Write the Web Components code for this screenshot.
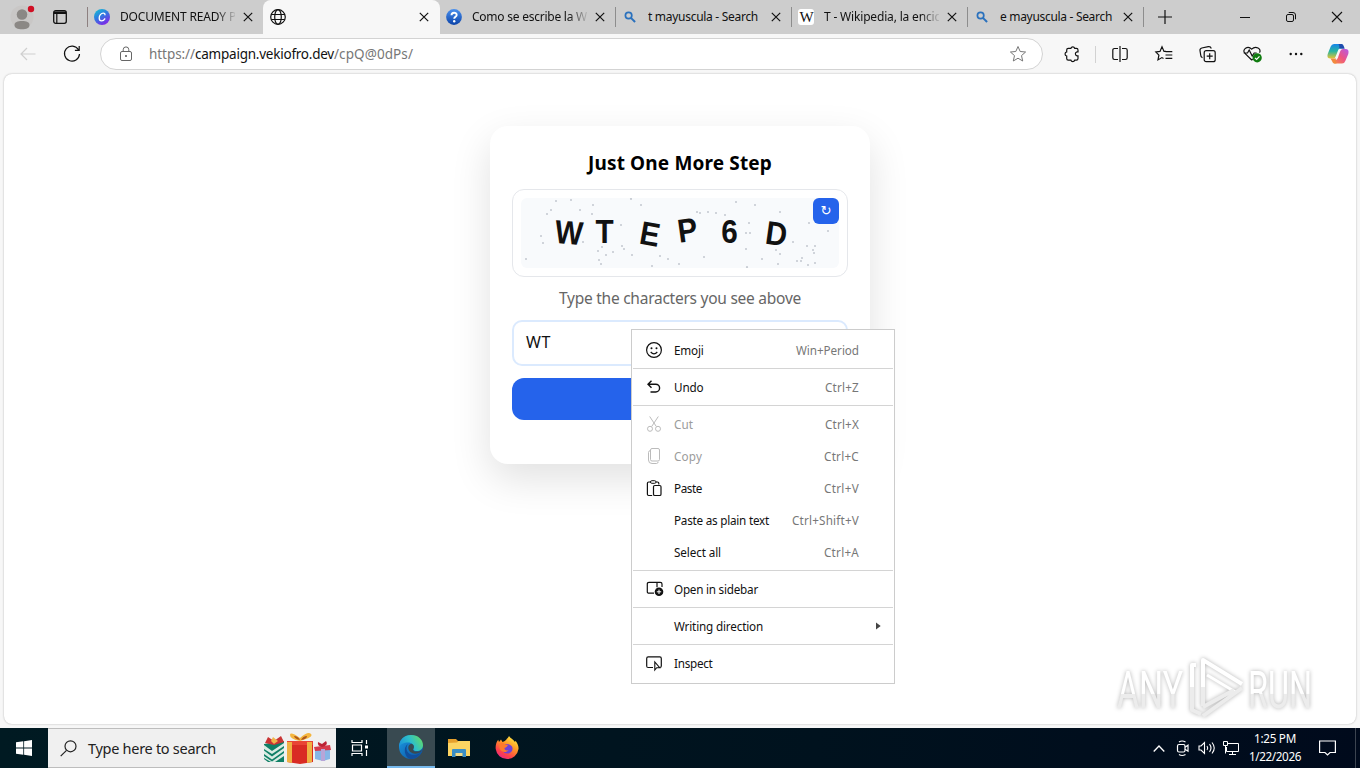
<!DOCTYPE html>
<html lang="en">
<head>
<meta charset="utf-8">
<title>Just One More Step</title>
<style>
  html, body { margin: 0; height: 100%; overflow: hidden; }
  body { font-family: "Noto Sans", "Open Sans", sans-serif; font-size: 12px; color: #111; }
</style>
</head>
<body>
<desktop-screen></desktop-screen>

<script>
const svg = (w, h, body, attrs = "") =>
  `<svg width="${w}" height="${h}" viewBox="0 0 ${w} ${h}" fill="none" stroke="currentColor" ${attrs}>${body}</svg>`;

const icons = {
  close: svg(10, 10, `<path d="M.8.8l8.4 8.4M9.2.8L.8 9.2" stroke-width="1.2"/>`),
  winclose: svg(12, 12, `<path d="M1 1l10 10M11 1L1 11" stroke-width="1.1"/>`),
  plus: svg(14, 14, `<path d="M7 0v14M0 7h14" stroke-width="1.2"/>`),
  minimize: svg(10, 10, `<path d="M0 5.5h10"/>`),
  restore: svg(12, 12, `<rect x="1.5" y="3.5" width="7" height="7" rx="1.5"/><path d="M3.7 1.5H8a2.5 2.5 0 0 1 2.5 2.5v4.3"/>`),
  profile: svg(24, 30, `<circle cx="12" cy="15" r="11.5" fill="#c9c7c6" stroke="none"/><circle cx="12" cy="12.5" r="5.3" fill="#8b8885" stroke="none"/><path d="M4.5 23c0-3 3-4 7.500-4s7.500 1 7.500 4-3 4.200-7.500 4.200S4.500 26 4.500 23z" fill="#8b8885" stroke="none"/><circle cx="21" cy="7" r="3.200" fill="#d00f24" stroke="none"/>`),
  workspaces: svg(14, 14, `<rect x=".7" y=".7" width="12.600" height="12.600" rx="2" stroke-width="1.300"/><path d="M1 2.700h12" stroke-width="2.600"/><path d="M3.800 3v10" stroke-width="1.200"/>`),
  canva: svg(16, 16, `<defs><linearGradient id="g" x1="0" y1="0" x2=".6" y2="1"><stop offset="0" stop-color="#13c8d2"/><stop offset=".5" stop-color="#2f7be0"/><stop offset="1" stop-color="#7d2ae8"/></linearGradient></defs><circle cx="8" cy="8" r="8" fill="url(#g)" stroke="none"/><path d="M11 5.800c0-1-.7-1.700-1.700-1.700C7 4.100 5.200 6.500 5.200 8.900c0 1.800 1 2.900 2.500 2.900 1.300 0 2.400-.8 3.100-2" stroke="#fff" stroke-width="1.300" stroke-linecap="round"/>`),
  globe: svg(16, 16, `<circle cx="8" cy="8" r="7.300" stroke-width="1.200"/><ellipse cx="8" cy="8" rx="3.300" ry="7.300" stroke-width="1.200"/><path d="M1.300 5.500h13.400M1.300 10.500h13.400" stroke-width="1.200"/>`),
  help: svg(16, 16, `<defs><linearGradient id="g" x1="0" y1="0" x2="0" y2="1"><stop offset="0" stop-color="#4a90ee"/><stop offset="1" stop-color="#0b43a8"/></linearGradient></defs><circle cx="8" cy="8" r="7.900" fill="url(#g)" stroke="none"/><path d="M5.500 6.200c0-3.400 5.200-3.200 5.200-.3 0 1.900-2.500 1.900-2.500 3.900" stroke="#fff" stroke-width="1.900"/><circle cx="8.200" cy="12.200" r="1.200" fill="#fff" stroke="none"/>`),
  search: svg(16, 16, `<circle cx="6.600" cy="6.500" r="3.200" stroke="#2a71bd" stroke-width="1.700"/><path d="M8.900 8.900l4.200 4.100" stroke="#2a71bd" stroke-width="2"/>`),
  wiki: `<span class="wiki">W</span>`,
  back: svg(16, 14, `<path d="M15.500 7H1M7 1L1 7l6 6" stroke="#cfcfcf" stroke-width="1.200"/>`),
  reload: svg(18, 18, `<path d="M15.500 4.800A7.500 7.500 0 1 0 16.500 9M16.200 1v4.300h-4.300" stroke-width="1.200"/>`),
  lock: svg(14, 16, `<rect x="1.500" y="5.500" width="11" height="9" rx="1.500" stroke="#666"/><path d="M4.200 5.500V3.700a2.800 2.800 0 0 1 5.600 0v1.800" stroke="#666"/><circle cx="7" cy="10" r="1" fill="#555" stroke="none"/>`),
  star: svg(18, 18, `<path d="M9 1.500l2.200 5 5.400.5-4.100 3.600 1.200 5.400L9 13.200 4.300 16l1.200-5.400L1.400 7l5.400-.5z" stroke="#777" stroke-linejoin="round"/>`),
  puzzle: svg(16, 16, `<path d="M4.300 2.300h2.600a2 2 0 0 1 3.800 0h1.700q1.600 0 1.600 1.600v1.900h-1a2.100 2.100 0 0 0 0 4.100h1v2.600q0 1.700-1.700 1.700h-1.600a2 2 0 0 1-3.800 0H4.300q-1.600 0-1.600-1.600V10a2.100 2.100 0 0 1 0-4.100v-2q0-1.600 1.600-1.600z" stroke-width="1.200"/>`),
  split: svg(16, 16, `<path d="M6 2.500H2.500q-1.700 0-1.700 1.700v7.600q0 1.700 1.700 1.700H6M10 2.500h3.500q1.700 0 1.700 1.700v7.600q0 1.700-1.700 1.700H10M8 0v16" stroke-width="1.200"/>`),
  favorites: svg(18, 16, `<path d="M11 5.400H9L7 .8 5 5.400l-4.200.5 3.100 3.200-.9 4.800 3.900-2.300 1.600.9M10.500 5.700h6.800M10.500 9h6.800M10.500 12.300h6.800" stroke-width="1.200"/>`),
  collections: svg(18, 18, `<rect x="5.200" y="5.700" width="11" height="11" rx="2" stroke-width="1.200"/><path d="M3.500 12.800A3 3 0 0 1 1.700 10L1 5.600Q.7 3.500 2.800 3l6.500-1.300q2.200-.4 3 1.800M10.700 8.200v6M7.700 11.200h6" stroke-width="1.200"/>`),
  health: svg(20, 18, `<g transform="translate(.7 0)"><path d="M9 15L2 8.200C-1 4.500 5 0 9 4.200 13 0 19.300 4 16.800 7.700M1 8h3.800L6.500 5l3 6 2-3H14M9 15l1-1" stroke-width="1.200"/><circle cx="14.500" cy="12.800" r="4.600" fill="#107c10" stroke="none"/><path d="M12.300 12.800l1.600 1.600 2.900-3" stroke="#fff" stroke-width="1.200"/></g>`),
  more: svg(14, 4, `<g fill="currentColor" stroke="none"><circle cx="1.700" cy="2" r="1.200"/><circle cx="7" cy="2" r="1.200"/><circle cx="12.300" cy="2" r="1.200"/></g>`),
  copilot: svg(22, 22, `<defs><linearGradient id="a" x1="0" y1="0" x2="0" y2="1"><stop stop-color="#1684ea"/><stop offset=".5" stop-color="#29b5a0"/><stop offset="1" stop-color="#e8c332"/></linearGradient><linearGradient id="b" x1="0" y1="1" x2="1" y2="0"><stop stop-color="#f8913c"/><stop offset=".5" stop-color="#ed5484"/><stop offset="1" stop-color="#b45bea"/></linearGradient></defs><path d="M14.500 1H7Q4.600 1 3.700 3.500L.7 11Q-.5 15.500 3.500 15.500h2.700q2 0 2.700-2.600L11.200 7Q12 4.800 14.500 4.700h2Q16 1 14.500 1z" fill="url(#a)" stroke="none"/><path d="M11.500 1h3q1.900 0 2.500 2.700l.7 2h-5.500Q13 3 11.500 1z" fill="#1e4cad" stroke="none"/><path d="M7.500 20.500H15q2.400 0 3.300-2.500l3-7Q22.500 6 18.500 6h-2.700q-2 0-2.700 2.600L10.800 15q-.8 2.300-3.300 2.300h-2q.5 3.200 2 3.200z" fill="url(#b)" stroke="none"/><path d="M3.500 15.500H9q-1 2.500.5 5H7.500q-1.700 0-2.500-2.600z" fill="#f28a3d" stroke="none"/>`),
  emoji: svg(16, 16, `<circle cx="8" cy="8" r="7.400" stroke-width="1.200"/><path d="M4.700 10q3.300 3.600 6.600 0" stroke-width="1.200"/><circle cx="5.500" cy="6.200" r="1" fill="currentColor" stroke="none"/><circle cx="10.500" cy="6.200" r="1" fill="currentColor" stroke="none"/>`),
  undo: svg(16, 16, `<path d="M5.500 1.700L2 5.200l3.500 3.500M2.200 5.200h7.500a3.900 3.900 0 0 1 0 7.800H4.500" stroke-width="1.400"/>`),
  cut: svg(16, 16, `<path d="M3.700.5l6.600 10M12.300.5L5.700 10.500"/><circle cx="4" cy="12.800" r="2.500"/><circle cx="12" cy="12.800" r="2.500"/>`),
  copy: svg(16, 16, `<rect x="4.500" y=".5" width="9" height="12.500" rx="1.500"/><path d="M4.500 2.500q-2 .2-2 2V12q0 3.500 3.500 3.500h4.500q1.300 0 1.700-1.500"/>`),
  paste: svg(16, 16, `<path d="M5 2H2.700Q1.400 2 1.400 3.300v11q0 1.200 1.300 1.200h3.500M10 2h1.500q1.300 0 1.300 1.300v1.200" stroke-width="1.200"/><rect x="4.500" y=".7" width="5.500" height="2.600" rx="1.300"/><rect x="7.500" y="5.500" width="7.500" height="10" rx="1.300" stroke-width="1.200"/>`),
  sidebar: svg(18, 18, `<path d="M8 12.200H3q-1.700 0-1.700-1.500V3Q1.300 1.300 3 1.300h11.300q1.700 0 1.700 1.700v3M11 1.300v5" stroke-width="1.200"/><circle cx="13" cy="10.800" r="4.300" fill="#111" stroke="none"/><path d="M13 8.600V13M10.800 10.800h4.400" stroke="#fff"/>`),
  inspect: svg(16, 16, `<path d="M7 12.500H2.200Q.7 12.500.7 11V3.400q0-1.500 1.500-1.500h11.600q1.500 0 1.500 1.500V11q0 1.500-1.500 1.500H13" stroke-width="1.200"/><path d="M8.800 7v8l1.900-2.300h3z" stroke-width="1.100"/>`),
  arrow: svg(5, 8, `<path d="M0 .5v7L4.700 4z" fill="#444" stroke="none"/>`),
  windows: svg(16, 16, `<path d="M0 2.300L7.300 1.300v6.300H0zM8.100 1.200L16 0v7.600H8.100zM0 8.400h7.300v6.300L0 13.700zM8.100 8.400H16V16l-7.900-1.200z" fill="#fff" stroke="none"/>`),
  magnifier: svg(17, 17, `<circle cx="10.500" cy="6.300" r="5.500" stroke-width="1.200"/><path d="M6.500 10.300L.7 16.200" stroke-width="1.200"/>`),
  gifts: svg(69, 32, `<g stroke="none"><path d="M1 12l20-3v21L5 30l-4-3z" fill="#0f7f66"/><path d="M1 13l8 6 12-8v3L9 22 1 17zM1 18.500l8 6L21 16v3L9 27.500l-8-5.500zM1 24l8 5.500L21 21v3l-9 6H8l-7-4z" fill="#d9ece3"/><path d="M2 11l3-6 6 4 7-5 3 6-10 3z" fill="#c93434"/><path d="M10 5l5 4-4 3-3-3z" fill="#f0b54a"/><path d="M24 9h26v21l-13 2-13-2z" fill="#d92b24"/><path d="M24 9h26v4H24z" fill="#e94435"/><path d="M24 10h5v21l-5-1zM44 10h5v20l-5 1z" fill="#efb243"/><path d="M37 9Q27 7 27 3t10 3q8-7 11-4t-11 7z" fill="#f4b53e"/><path d="M31 4q4 0 6 4-5-1-6-4zm13 0q-4 0-6 4 6-1 6-4z" fill="#ad561b"/><path d="M52 17l15-1v11l-7 2-8-2z" fill="#86b6e6"/><path d="M51 15l16-2 1 5-16 1z" fill="#d63b4c"/><path d="M58 17h4v12h-4z" fill="#b7a5d8"/><path d="M59 15q-5-1-4-5l4 2 4-3q3 4-4 6z" fill="#bc2335"/></g>`),
  taskview: svg(18, 16, `<path d="M1 0v2.500h10V0M1 16v-2.500h10V16M1.500 5h9v6h-9zM15.500 0v4M15.500 10v6" stroke="#fff" stroke-width="1.200"/><path d="M14 5.500h3v3h-3z" fill="#fff" stroke="none"/>`),
  edge: svg(24, 24, `<defs><linearGradient id="a" x1="0" y1=".6" x2="1" y2=".2"><stop stop-color="#1b91d9"/><stop offset=".5" stop-color="#2dbfca"/><stop offset="1" stop-color="#65dd62"/></linearGradient><linearGradient id="b" x1="0" y1="0" x2="1" y2="1"><stop stop-color="#1b9be3"/><stop offset="1" stop-color="#0b4d9d"/></linearGradient></defs><g stroke="none"><circle cx="12" cy="12" r="12" fill="url(#b)"/><path d="M0 11C.5 4.500 5.500 0 12 0c7.500 0 12 5 12 10 0 4-3 6-6.200 6-3.300 0-4.100-1.400-3.300-2.500C15.800 10 12.500 7.500 9 7.500 5 7.500 1 9 0 13z" fill="url(#a)"/><path d="M9 9c-3.500 4.500-.5 11.300 6.500 11 3 0 5.300-1.400 6.600-3-2.300 4.700-6.300 7-10.600 7C5.500 23 3.500 12 9 9z" fill="#114e9c"/><path d="M14.500 13.500c1-1.700.3-3.700-1.600-4.700-3.900.2-4.800 5-1.800 7.900 3.200 2.900 8 2.300 11-.2l2-2.500c-3 3.800-11.700 3.300-9.600-.5z" fill="#394a51"/></g>`),
  explorer: svg(22, 20, `<g stroke="none"><path d="M0 1h8l2 2h12v7H0z" fill="#e6a02c"/><path d="M0 5l9-.5L10.500 3H22v15H0z" fill="#fcd462"/><path d="M4 12q0-1 1-1h12q1 0 1 1v7h-3.500v-4h-7v4H4z" fill="#3a8ec6"/><path d="M8 15h6v3H8z" fill="#f3dc8c"/></g>`),
  firefox: svg(24, 24, `<defs><linearGradient id="a" x1=".8" y1="0" x2=".2" y2="1"><stop stop-color="#fff045"/><stop offset=".4" stop-color="#ff9824"/><stop offset=".75" stop-color="#ff3f4a"/><stop offset="1" stop-color="#e6248f"/></linearGradient></defs><g stroke="none"><path d="M14 0c1 2 4.500 3.500 6 6l.5-1.200C23 8 23.700 10.500 23.500 13A11.500 11.500 0 0 1 .7 13C.3 9 1.500 6 3.200 3.800L4 6l2-2.500L7.500 6c2-.5 3-1.500 3.700-2.200C12 2.500 13.500 1.500 14 0z" fill="url(#a)"/><path d="M8 9.500c2-2 7-2 9 1 2 4-1.500 7.500-5 7-4-.3-6-3.500-4.800-6.300l3.200.6 2-1.700z" fill="#7142d4"/><path d="M4.500 8c2-2 4-1.300 5.500.3l3 .7c-1 2-3.500 1.500-3.500 3.500 0 1.500 2 2.500 4 1.500-1.500 3-7.700 3-9-2z" fill="#ff7a2b"/></g>`),
  chevron: svg(12, 7, `<path d="M.7 6.500L6 1l5.300 5.500" stroke-width="1.300"/>`),
  camera: svg(14, 16, `<rect x="1.500" y="4.500" width="7.500" height="7.500" rx="1.500" stroke-width="1.200"/><path d="M9 7.200l3-2v6l-3-2M3 2q3-2 6.500 0M3 14.500q3 2 6.500 0" stroke-width="1.200"/>`),
  volume: svg(18, 14, `<path d="M1 5h2l3.500-3.500v11L3 9H1zM9 5q1.500 2 0 4M11.500 3.200q3 3.800 0 7.600M14 1.500q4.500 5.500 0 11" stroke-width="1.100"/>`),
  network: svg(17, 15, `<path d="M4.500 2.500h11v8h-12V6M9.500 10.500v3M6 13.500h7"/><path d="M.5.500h4v4h-4zM2.500 4.500v8" fill="#001020"/>`),
  notice: svg(17, 17, `<path d="M.6 1h15.800v11.500H11L8.500 15 6 12.500H.6z" stroke-width="1.200"/>`)
};

/* Text held to a given width by spreading or tightening its letters. */
class FitText extends HTMLElement {
  constructor() {
    super();
    this.attachShadow({ mode: "open" }).innerHTML =
      `<style>:host { display: inline-block; white-space: nowrap; flex: none; }</style><slot></slot>`;
  }
  connectedCallback() {
    const goal = Number(this.getAttribute("w"));
    if (!goal) return;
    const gap = (goal - this.getBoundingClientRect().width) / this.textContent.length;
    this.style.letterSpacing = gap.toFixed(3) + "px";
  }
}
customElements.define("fit-text", FitText);

class UiIcon extends HTMLElement {
  constructor() {
    super();
    this.attachShadow({ mode: "open" });
  }
  connectedCallback() {
    this.shadowRoot.innerHTML = `
      <style>
        :host { display: grid; place-items: center; flex: none; }
        svg { display: block; overflow: visible; }
        .wiki { width: 16px; height: 16px; border-radius: 3px; background: #fff; color: #111;
          font: 15px/16px "Liberation Serif", serif; text-align: center; letter-spacing: -1px; }
      </style>${icons[this.getAttribute("name")] || ""}`;
  }
}
customElements.define("ui-icon", UiIcon);

class BrowserTab extends HTMLElement {
  constructor() {
    super();
    this.attachShadow({ mode: "open" });
  }
  connectedCallback() {
    this.shadowRoot.innerHTML = `
      <style>
        :host { display: flex; align-items: center; width: 176px; height: 34px; box-sizing: border-box;
          padding: 0 9px 0 6px; flex: none; border-right: 1px solid transparent; }
        :host([line]) { border-image: linear-gradient(transparent 8px, #8d8d8d 8px 26px, transparent 26px) 1; border-left: 0; border-style: solid; border-width: 0 1px 0 0; }
        :host([active]) { margin-left: -1px; width: 177px; padding-left: 7px; background: #f7f7f7; border-radius: 8px 8px 0 0; }
        ui-icon { width: 16px; }
        .title { width: 116px; margin: 0 8px 0 10px; overflow: hidden; white-space: nowrap; font-size: 12px; line-height: 20px; }
        :host([fade]) .title { mask-image: linear-gradient(90deg, #000 84%, transparent 102%); }
        .x { width: 12px; margin-left: -1px; }
      </style>
      <ui-icon name="${this.getAttribute("icon")}"></ui-icon>
      <div class="title"><slot></slot></div>
      <ui-icon class="x" name="close"></ui-icon>`;
  }
}
customElements.define("browser-tab", BrowserTab);

class TabStrip extends HTMLElement {
  constructor() {
    super();
    this.attachShadow({ mode: "open" }).innerHTML = `
      <style>
        :host { display: flex; align-items: center; height: 34px; background: #cdcdcd; }
        .lead { display: flex; align-items: center; width: 88px; box-sizing: border-box; height: 34px; padding-left: 10px; gap: 19px;
          border-image: linear-gradient(transparent 8px, #8d8080 8px 26px, transparent 26px) 1; border-width: 0 1px 0 0; border-style: solid; }
        .tabs { display: flex; }
        .new { width: 42px; }
        .window { display: flex; margin-left: auto; }
        .window ui-icon { width: 46px; height: 34px; }
      </style>
      <div class="lead"><ui-icon name="profile"></ui-icon><ui-icon name="workspaces"></ui-icon></div>
      <div class="tabs">
        <browser-tab icon="canva" fade><fit-text w="116">DOCUMENT READY P</fit-text></browser-tab>
        <browser-tab icon="globe" active></browser-tab>
        <browser-tab icon="help" fade line><fit-text w="115">Como se escribe la W</fit-text></browser-tab>
        <browser-tab icon="search" line><fit-text w="110">t mayuscula - Search</fit-text></browser-tab>
        <browser-tab icon="wiki" fade line><fit-text w="116">T - Wikipedia, la encic</fit-text></browser-tab>
        <browser-tab icon="search" line><fit-text w="112">e mayuscula - Search</fit-text></browser-tab>
      </div>
      <ui-icon class="new" name="plus"></ui-icon>
      <div class="window">
        <ui-icon name="minimize"></ui-icon><ui-icon name="restore"></ui-icon><ui-icon name="winclose"></ui-icon>
      </div>`;
  }
}
customElements.define("tab-strip", TabStrip);

class AddressBar extends HTMLElement {
  constructor() {
    super();
    this.attachShadow({ mode: "open" }).innerHTML = `
      <style>
        :host { display: flex; align-items: center; height: 40px; background: #f7f7f7; padding-left: 6px; }
        .nav { width: 44px; }
        .field { display: flex; align-items: center; width: 943px; height: 32px; box-sizing: border-box; margin-left: 6px;
          border: 1px solid #d3d3d3; border-radius: 16px; background: #fff; padding: 0 15px 0 18px; font-size: 13.5px; color: #777; }
        .url { display: flex; margin: 0 auto 0 16px; }
        b { font-weight: 400; color: #111; }
        .tools { display: flex; align-items: center; padding-left: 7px; }
        .tools ui-icon { width: 44px; }
        .tools i { width: 1px; height: 17px; background: #d2d2d2; margin: 0 2px 0 1px; }
        .tools ui-icon.last { width: 40px; }
      </style>
      <ui-icon class="nav" name="back"></ui-icon><ui-icon class="nav" name="reload"></ui-icon>
      <div class="field">
        <ui-icon name="lock"></ui-icon>
        <div class="url"><fit-text w="46">https://</fit-text><b><fit-text w="139">campaign.vekiofro.dev</fit-text></b><fit-text w="79">/cpQ@0dPs/</fit-text></div>
        <ui-icon name="star"></ui-icon>
      </div>
      <div class="tools">
        <ui-icon name="puzzle"></ui-icon><i></i><ui-icon name="split"></ui-icon><ui-icon name="favorites"></ui-icon>
        <ui-icon name="collections"></ui-icon><ui-icon name="health"></ui-icon><ui-icon name="more"></ui-icon>
        <ui-icon class="last" name="copilot"></ui-icon>
      </div>`;
  }
}
customElements.define("address-bar", AddressBar);

const specks = [
  [30,12],[35,3],[50,2],[26,16],[59,12],[72,7],[71,16],[110,1],[120,7],[100,27],[20,38],[22,45],[5,61],[77,53],[81,49],[85,57],
  [92,54],[78,62],[80,66],[101,48],[103,51],[111,57],[131,68],[139,58],[147,61],[158,66],[183,59],[176,14],[179,15],[187,14],
  [195,15],[204,17],[215,4],[234,7],[259,14],[288,25],[307,33],[228,25],[225,35],[229,35],[225,51],[226,69],[241,61],[255,52],
  [259,56],[257,66],[272,44],[276,63],[281,60],[280,63],[287,67],[286,48],[294,48],[292,52],[293,55],[294,65],[62,44]
];
const glyphs = [["W", 48, 34.500, 5], ["T", 83.500, 33.500, 0], ["E", 129, 36, 10], ["P", 166.500, 32, -8], ["6", 208.500, 33, 0], ["D", 255.500, 35.500, 8]];

class CaptchaImage extends HTMLElement {
  constructor() {
    super();
    this.attachShadow({ mode: "open" }).innerHTML = `
      <style>
        :host { display: block; position: relative; box-sizing: border-box; height: 88px; padding: 8px; border: 1px solid #e5e7eb; border-radius: 12px; }
        svg { display: block; border-radius: 6px; background: #f8fafc; }
        text { font: bold 33px "Liberation Sans", Arial, sans-serif; text-anchor: middle; fill: #111; }
        button { position: absolute; top: 8px; right: 8px; width: 26px; height: 26px; padding: 0; border: 0; border-radius: 6px;
          background: #2563eb; color: #fff; font: 13px/26px "DejaVu Sans", sans-serif; }
      </style>
      <svg width="318" height="70">
        ${specks.map(([x, y]) => `<circle cx="${x}" cy="${y}" r="1.100" fill="#c6cbd2"/>`).join("")}
        ${glyphs.map(([c, x, y, r]) => `<text transform="translate(${x} ${y}) rotate(${r}) scale(.9 1)" y="11.500">${c}</text>`).join("")}
      </svg>
      <button>↻</button>`;
  }
}
customElements.define("captcha-image", CaptchaImage);

class CaptchaCard extends HTMLElement {
  constructor() {
    super();
    this.attachShadow({ mode: "open" }).innerHTML = `
      <style>
        :host { display: flex; flex-direction: column; box-sizing: border-box; width: 380px; height: 338px; padding: 22px;
          border-radius: 18px; background: #fff; box-shadow: 0 15px 40px rgba(0, 0, 0, .12); text-align: center; }
        h1 { margin: 0 0 11px; font-size: 19px; line-height: 30px; font-weight: 700; color: #000; }
        p { margin: 9px 0 10px; font-size: 15.500px; line-height: 24px; color: #666; }
        .answer { box-sizing: border-box; height: 46px; border: 2px solid #dbeafe; border-radius: 10px; padding: 0 12px;
          text-align: left; font-size: 16px; line-height: 41px; color: #111; }
        .send { height: 42px; margin-top: 12px; border-radius: 12px; background: #2563eb; }
        h1, captcha-image, p, .answer, .send { flex: none; }
      </style>
      <h1><fit-text w="184">Just One More Step</fit-text></h1>
      <captcha-image></captcha-image>
      <p><fit-text w="242">Type the characters you see above</fit-text></p>
      <div class="answer"><fit-text w="25">WT</fit-text></div>
      <div class="send"></div>`;
  }
}
customElements.define("captcha-card", CaptchaCard);

class MenuItem extends HTMLElement {
  constructor() {
    super();
    this.attachShadow({ mode: "open" });
  }
  connectedCallback() {
    this.shadowRoot.innerHTML = `
      <style>
        :host { display: flex; align-items: center; height: 32px; padding: 0 35px 0 14px; font-size: 11.700px; color: #111; }
        :host([disabled]) { color: #9b9b9b; }
        :host([more]) { padding-right: 13px; }
        .icon { width: 16px; height: 16px; margin-right: 12px; }
        :host([disabled]) .icon { color: #bbb; }
        .keys { margin-left: auto; color: #777; }
        .label { padding-bottom: 1px; }
      </style>
      <ui-icon class="icon" name="${this.getAttribute("icon")}"></ui-icon>
      <span class="label"><slot></slot></span>
      ${this.hasAttribute("more")
        ? `<span class="keys"><ui-icon name="arrow"></ui-icon></span>`
        : `<span class="label keys"><slot name="keys"></slot></span>`}`;
  }
}
customElements.define("menu-item", MenuItem);

class ContextMenu extends HTMLElement {
  constructor() {
    super();
    const item = (label, w, icon, keys = "", kw = 0, flag = "") => `
      <menu-item icon="${icon}" ${flag}><fit-text w="${w}">${label}</fit-text>${keys && `<fit-text slot="keys" w="${kw}">${keys}</fit-text>`}</menu-item>`;
    this.attachShadow({ mode: "open" }).innerHTML = `
      <style>
        :host { display: block; box-sizing: border-box; width: 264px; padding: 4px 0; border: 1px solid #ccc; background: #fff; }
        hr { height: 1px; margin: 2px 1px; border: 0; background: #d4d4d4; }
      </style>
      ${item("Emoji", 29.500, "emoji", "Win+Period", 63)}
      <hr>
      ${item("Undo", 29.500, "undo", "Ctrl+Z", 34)}
      <hr>
      ${item("Cut", 19, "cut", "Ctrl+X", 34, "disabled")}
      ${item("Copy", 28, "copy", "Ctrl+C", 35, "disabled")}
      ${item("Paste", 28, "paste", "Ctrl+V", 35)}
      ${item("Paste as plain text", 95, "", "Ctrl+Shift+V", 67)}
      ${item("Select all", 47, "", "Ctrl+A", 35)}
      <hr>
      ${item("Open in sidebar", 84, "sidebar")}
      <hr>
      ${item("Writing direction", 89, "", "", 0, "more")}
      <hr>
      ${item("Inspect", 38.500, "inspect")}`;
  }
}
customElements.define("context-menu", ContextMenu);

class WaterMark extends HTMLElement {
  constructor() {
    super();
    this.attachShadow({ mode: "open" }).innerHTML = `
      <style>
        :host { display: block; }
        svg { display: block; overflow: visible; filter: drop-shadow(0 0 2px rgba(0, 0, 0, .3)); }
        text { font: 400 51px Roboto, sans-serif; fill: url(#w); }
      </style>
      <svg width="200" height="64">
        <defs>
          <linearGradient id="w" x1="0" y1="0" x2="0" y2="1"><stop offset=".55" stop-color="#fff"/><stop offset=".56" stop-color="#ececec"/></linearGradient>
        </defs>
        <text y="51" textLength="66" lengthAdjust="spacingAndGlyphs">ANY</text>
        <text x="131" y="51" textLength="64" lengthAdjust="spacingAndGlyphs">RUN</text>
        <g fill="none" stroke-width="4" stroke-linejoin="round">
          <path d="M79 8h-4v22" stroke="#fff"/>
          <path d="M75 30v23l9 4M86 30v19" stroke="#ececec"/>
          <path d="M86 30V3l39 24" stroke="#fff"/>
          <path d="M90 18l30 18" stroke="#fff" stroke-width="3"/>
          <path d="M125 31L86 59M117 33L86 50" stroke="#ececec"/>
        </g>
      </svg>`;
  }
}
customElements.define("water-mark", WaterMark);

class TaskBar extends HTMLElement {
  constructor() {
    super();
    this.attachShadow({ mode: "open" }).innerHTML = `
      <style>
        :host { display: flex; align-items: center; height: 40px; background: linear-gradient(90deg, #001a22, #00121e 60%, #000a1c); color: #fff; }
        .app { width: 48px; height: 40px; }
        .search { display: flex; align-items: center; box-sizing: border-box; width: 288px; height: 40px; padding: 0 4px 0 12px;
          border: 1px solid #bdbdbd; border-width: 1px 0; background: #f0f0f0; color: #222; font-size: 14.500px; }
        .search fit-text { margin-left: 11px; }
        .search .art { margin-left: auto; }
        .task { margin-right: 3px; }
        .open { box-sizing: border-box; background: #394a51; border-bottom: 2px solid #76b9ed; }
        .tray { display: flex; align-items: center; margin-left: auto; height: 40px; }
        .tray ui-icon { width: 24px; }
        .clock { width: 64px; padding-bottom: 2px; text-align: center; font-size: 11.700px; line-height: 18px; }
        .clock fit-text { display: block; width: max-content; margin: 0 auto; }
        .tray .notice { width: 40px; }
        .peek { width: 1px; height: 40px; margin: 0 4px 0 8px; background: #3c4450; }
      </style>
      <ui-icon class="app" name="windows"></ui-icon>
      <div class="search">
        <ui-icon name="magnifier"></ui-icon><fit-text w="128">Type here to search</fit-text>
        <ui-icon class="art" name="gifts"></ui-icon>
      </div>
      <ui-icon class="app task" name="taskview"></ui-icon>
      <ui-icon class="app open" name="edge"></ui-icon>
      <ui-icon class="app" name="explorer"></ui-icon>
      <ui-icon class="app ff" name="firefox"></ui-icon>
      <div class="tray">
        <ui-icon name="chevron"></ui-icon><ui-icon name="camera"></ui-icon><ui-icon name="volume"></ui-icon><ui-icon name="network"></ui-icon>
        <div class="clock"><fit-text w="42">1:25 PM</fit-text><fit-text w="52">1/22/2026</fit-text></div>
        <ui-icon class="notice" name="notice"></ui-icon>
        <div class="peek"></div>
      </div>`;
  }
}
customElements.define("task-bar", TaskBar);

class DesktopScreen extends HTMLElement {
  constructor() {
    super();
    this.attachShadow({ mode: "open" }).innerHTML = `
      <style>
        :host { display: flex; flex-direction: column; position: relative; width: 1360px; height: 768px; overflow: hidden; background: #f7f7f7; }
        main { display: flex; justify-content: center; align-items: flex-start; box-sizing: border-box; flex: 1; margin: 0 4px 4px; padding-top: 52px;
          border-radius: 8px; background: #fff; box-shadow: 0 0 2px rgba(0, 0, 0, .3); overflow: hidden; }
        context-menu { position: absolute; left: 631px; top: 329px; }
        water-mark { position: absolute; left: 1117px; top: 657px; }
      </style>
      <tab-strip></tab-strip>
      <address-bar></address-bar>
      <main><captcha-card></captcha-card></main>
      <task-bar></task-bar>
      <context-menu></context-menu>
      <water-mark></water-mark>`;
  }
}
customElements.define("desktop-screen", DesktopScreen);
</script>
</body>
</html>
